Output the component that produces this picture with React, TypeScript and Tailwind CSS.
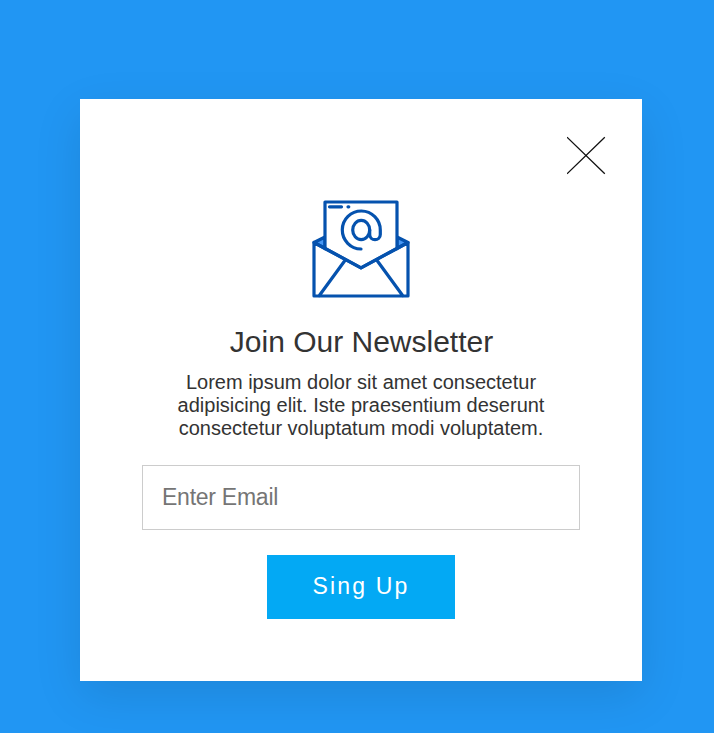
export default function App() {
  return (
    <div className="flex h-[733px] w-[714px] items-start overflow-hidden bg-[#2196f3] pt-[99px] pl-[80px] font-['Liberation_Sans',Arial,sans-serif] text-[#333]">
      <main className="relative flex h-[582px] w-[562px] flex-col items-center bg-white pt-[101px] shadow-[0_15px_45px_rgba(0,0,0,0.1)]">
        <button aria-label="Close" className="absolute top-[37px] right-[36px] h-[39px] w-[39px]">
          <svg viewBox="0 0 39 39" className="h-full w-full" fill="none" stroke="#111" strokeWidth="1.3">
            <path d="M0 1.2 37.8 37.8M37.8 1.2 0 37.8" />
          </svg>
        </button>
        <svg viewBox="0 0 98 98" className="h-[98px] w-[98px]" fill="none" stroke="#0552ae" strokeWidth="3.2" strokeLinejoin="round" strokeLinecap="round">
          <path d="M13 37 2 42.5l11 6zM85 37l11 5.5-11 6z" fill="#4798f5" />
          <path d="M13 48.5V2h72v46.5L49 67.8z" fill="#fff" />
          <path d="M2 42.5V96h94V42.5L49 67.8zM33.3 60 7 96M64.7 60 91 96" />
          <path d="M17.5 6.8h12M36 6.8h.8" />
          <path d="M49 49a19 19 0 1 1 19.3-19v4.4c0 7-10.6 7-10.6 0V30" />
          <ellipse cx="49.2" cy="30" rx="8.5" ry="9.6" />
        </svg>
        <h1 className="mt-[26px] pl-px text-[30px] leading-[35px]">Join Our Newsletter</h1>
        <p className="mt-[12px] text-center text-[20px] leading-[23px]">
          Lorem ipsum dolor sit amet consectetur<br />
          adipisicing elit. Iste praesentium deserunt<br />
          consectetur voluptatum modi voluptatem.
        </p>
        <input placeholder="Enter Email" className="mt-[25px] h-[65px] w-[438px] border border-[#ccc] px-[19px] text-[23px] tracking-[-0.25px] placeholder:text-[#757575]" />
        <button className="mt-[25px] h-16 w-[188px] bg-[#03a9f4] pb-px text-[23px] tracking-[2.2px] text-white">Sing Up</button>
      </main>
    </div>
  );
}
